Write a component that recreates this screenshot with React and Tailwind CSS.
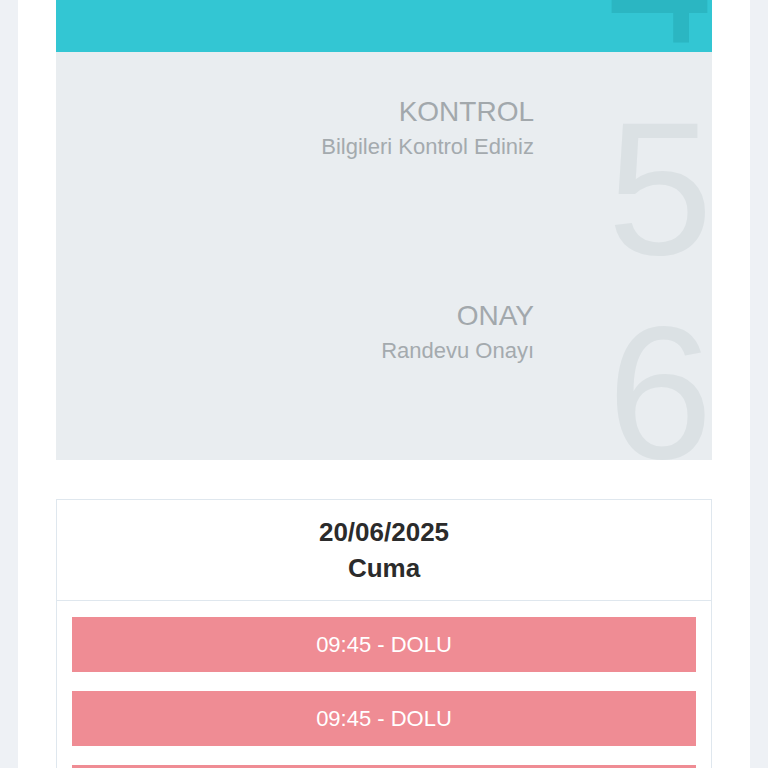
import React from "react";

const steps = [
  { n: "4", title: "BİLGİLER", sub: "Kişisel Bilgiler", active: true },
  { n: "5", title: "KONTROL", sub: "Bilgileri Kontrol Ediniz" },
  { n: "6", title: "ONAY", sub: "Randevu Onayı" },
];

function Step({ n, title, sub, active }) {
  return (
    <div
      className={
        "relative h-[204px] overflow-hidden " +
        (active ? "bg-[#33c6d3]" : "bg-[#e9edf0]")
      }
    >
      <div
        className={
          "absolute right-[-1px] text-[190px] leading-[190px] select-none " +
          (active ? "top-[34px] text-[#2bb6c2]" : "top-[41px] text-[#dbe1e4]")
        }
      >
        {n}
      </div>
      <div className="relative pt-[43px] pr-[178px] text-right">
        <div
          className={
            "text-[28px] leading-[34px] " +
            (active ? "text-white" : "text-[#a2a8ac]")
          }
        >
          {title}
        </div>
        <div
          className={
            "mt-1 text-[22px] leading-[28px] " +
            (active ? "text-white" : "text-[#a4aaae]")
          }
        >
          {sub}
        </div>
      </div>
    </div>
  );
}

export default function App() {
  const slots = ["09:45 - DOLU", "09:45 - DOLU", "09:45 - DOLU"];
  return (
    <div
      className="h-[768px] overflow-hidden bg-[#eef1f5] px-[18px]"
      style={{ fontFamily: '"Liberation Sans", Arial, sans-serif' }}
    >
      <div className="min-h-full bg-white px-[38px] pb-10">
        <div className="mt-[-152px] overflow-hidden">
          {steps.map((s) => (
            <Step key={s.n} {...s} />
          ))}
        </div>

        <div className="mt-[39px] border border-[#dfe7ee]">
          <div className="border-b border-[#dfe7ee] py-[14px] text-center text-[26px] font-bold leading-[36px] text-[#2b2b2b]">
            <div>20/06/2025</div>
            <div>Cuma</div>
          </div>
          <div className="flex flex-col gap-[19px] px-[15px] pt-[16px] pb-4">
            {slots.map((t, i) => (
              <div
                key={i}
                className="flex h-[55px] items-center justify-center bg-[#ef8c94] text-[22px] text-white"
              >
                {t}
              </div>
            ))}
          </div>
        </div>
      </div>
    </div>
  );
}
